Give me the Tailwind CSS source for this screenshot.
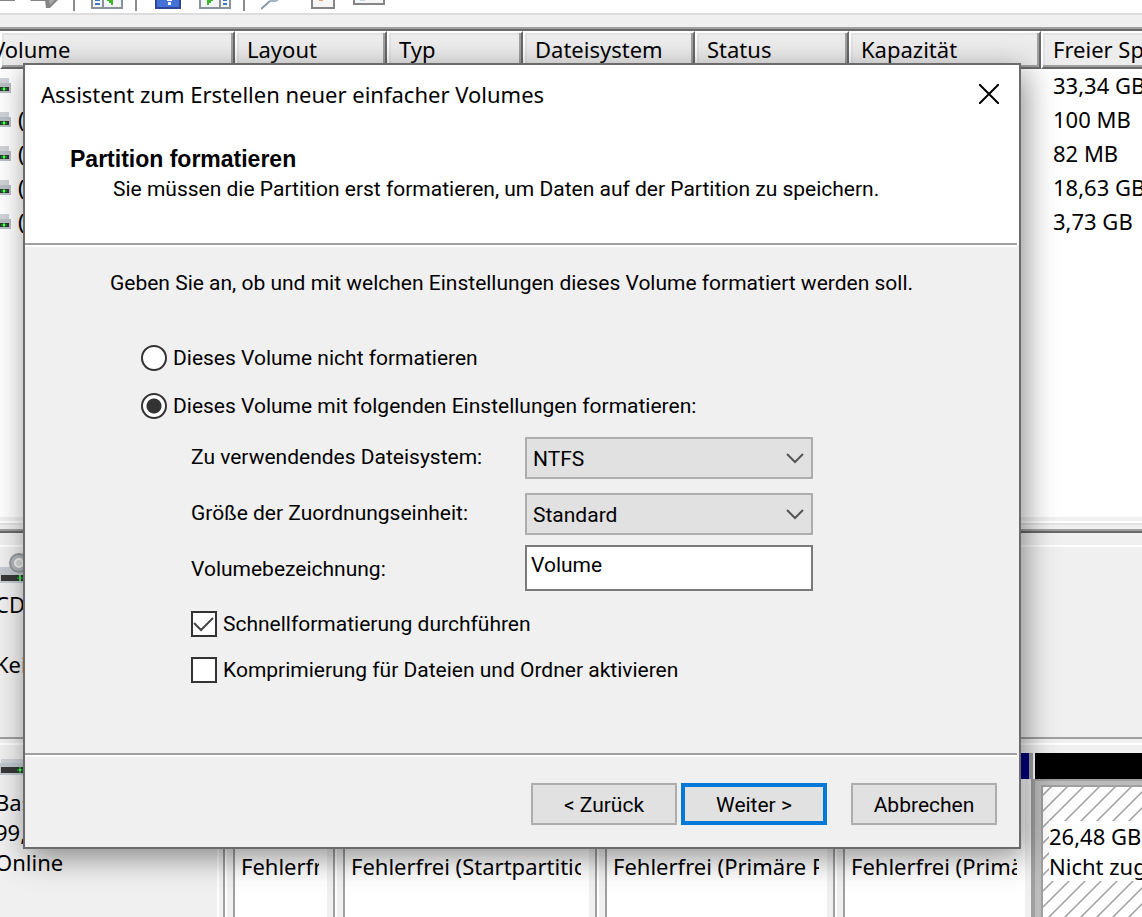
<!DOCTYPE html>
<html lang="de">
<head>
<meta charset="utf-8">
<title>Datenträgerverwaltung</title>
<script src="https://cdn.jsdelivr.net/npm/@tailwindcss/browser@4"></script>
</head>
<body class="relative h-screen overflow-hidden bg-[#f0f0f0] font-['Noto_Sans','Open_Sans',sans-serif] text-[22px] leading-[30px] text-black">

<svg class="hidden" aria-hidden="true">
  <symbol id="drive" viewBox="0 0 12 16">
    <path d="M0 0h9v5H0z" fill="#d0d3d7"/><path d="M0 5h11v10H0z" fill="#b9bfc6"/>
    <path d="M0 9h9v4H0z" fill="#333"/><path d="M1 10h6v2H1z" fill="#128a1c"/><path d="M3 9h2v4H3z" fill="#21b52b"/><path d="M3 10h2v2H3z" fill="#5dff68"/>
  </symbol>
  <symbol id="disk" viewBox="0 0 32 18">
    <path d="M1 0h31v6H1z" fill="#cfd3d8"/><path d="M0 4h32v12H0z" fill="#c2c8ce"/><path d="M1 8h31v6H1z" fill="#383838"/>
    <path d="M17 10h6v2h-6z" fill="#1e8f28"/><path d="M19 8h2v6h-2z" fill="#25a52f"/><path d="M19 10h2v2h-2z" fill="#66ff70"/>
  </symbol>
</svg>

<main class="flex h-full flex-col overflow-hidden">
  <nav class="flex h-[15px] shrink-0 items-start overflow-hidden border-b-2 border-[#dcdcdc] bg-white" aria-label="Symbolleiste">
    <svg class="h-[11px] w-[73px]" viewBox="0 0 73 11"><path d="M0 0h15v1H0zM30 0h16v1H31z" fill="#858585"/><path d="M45 0h13l-8 8h-4z" fill="#858585"/><path d="M49 0h6l-5 5z" fill="#a8a8a8"/></svg>
    <span class="h-[11px] w-[2px] bg-[#8c8c8c]"></span>
    <svg class="ml-4 h-[10px] w-[32px]" viewBox="0 0 32 10"><path d="M0 0h32v9H0z" fill="#8a9299"/><path d="M2 0h28v7H2z" fill="#f2f4f6"/><path d="M11 0h2v7h-2z" fill="#8a9299"/><path d="M4 0h5v1H4zM4 3h5v2H4z" fill="#3b78c8"/><path d="M16 0h6v5h-2V3h-2V1h-2z" fill="#3cb52c"/></svg>
    <span class="ml-3 h-[11px] w-[2px] bg-[#8c8c8c]"></span>
    <svg class="ml-[18px] h-[10px] w-[26px]" viewBox="0 0 26 10"><path d="M0 0h26v9H0z" fill="#2f4597"/><path d="M2 0h22v7H2z" fill="#4470d8"/><path d="M12 0h5v1h-5zM13 2h3v3h-3z" fill="#fff"/></svg>
    <svg class="ml-[18px] h-[10px] w-[32px]" viewBox="0 0 32 10"><path d="M0 0h32v9H0z" fill="#8a9299"/><path d="M2 0h28v7H2z" fill="#f2f4f6"/><path d="M20 0h2v7h-2z" fill="#8a9299"/><path d="M24 0h4v1h-4zM24 3h4v2h-4z" fill="#3b78c8"/><path d="M8 0h6v1h-2v2h-2v2H8z" fill="#3cb52c"/></svg>
    <span class="ml-3 h-[11px] w-[2px] bg-[#8c8c8c]"></span>
    <svg class="ml-4 h-[10px] w-[20px]" viewBox="0 0 20 10"><path d="M0 9l9-8" stroke="#8998a5" stroke-width="2"/><path d="M8 0h10l-3 2H9z" fill="#9fb6c9"/></svg>
    <svg class="ml-[30px] h-[10px] w-[24px]" viewBox="0 0 24 10"><path d="M0 0h24v9H0z" fill="#858585"/><path d="M2 0h20v7H2z" fill="#f6f6f6"/><path d="M8 0h4v1H8z" fill="#f0a070"/></svg>
    <svg class="ml-[18px] h-[10px] w-[32px]" viewBox="0 0 32 10"><path d="M0 0h32v5H0z" fill="#858585"/><path d="M2 0h28v3H2z" fill="#f6f6f6"/><path d="M7 0h5v1H7z" fill="#c2d6ea"/></svg>
  </nav>

  <section class="mt-3 flex h-[490px] shrink-0 flex-col overflow-hidden border-t-2 border-[#a0a0a0] bg-white">
    <table class="w-full min-w-[1240px] table-fixed border-separate border-spacing-0 border-t-2 border-[#696969] text-left">
      <colgroup><col class="w-[235px]"><col class="w-[152px]"><col class="w-[136px]"><col class="w-[172px]"><col class="w-[154px]"><col class="w-[192px]"><col></colgroup>
      <thead>
        <tr class="h-[38px] [&>th]:h-[38px] [&>th]:border-2 [&>th]:border-t-white [&>th]:border-l-white [&>th]:border-r-[#696969] [&>th]:border-b-[#696969] [&>th]:bg-[#ededed] [&>th]:px-[10px] [&>th]:pt-0 [&>th]:pb-[2px] [&>th]:font-normal [&>th]:whitespace-nowrap [&>th]:shadow-[inset_-2px_-2px_0_#a0a0a0,inset_2px_2px_0_#e3e3e3]">
          <th class="border-l-0"><span class="-ml-5">Volume</span></th><th>Layout</th><th>Typ</th><th>Dateisystem</th><th>Status</th><th>Kapazität</th><th>Freier Speicher</th>
        </tr>
      </thead>
      <tbody class="[&_td]:h-[34px] [&_td]:p-0 [&_td]:pb-[2px] [&_td:last-child]:pl-3">
        <tr><td><svg class="mt-[2px] h-4 w-3"><use href="#drive"/></svg></td><td colspan="5"></td><td>33,34 GB</td></tr>
        <tr><td><span class="flex items-center gap-[6px]"><svg class="mt-[2px] h-4 w-3"><use href="#drive"/></svg>(</span></td><td colspan="5"></td><td>100 MB</td></tr>
        <tr><td><span class="flex items-center gap-[6px]"><svg class="mt-[2px] h-4 w-3"><use href="#drive"/></svg>(</span></td><td colspan="5"></td><td>82 MB</td></tr>
        <tr><td><span class="flex items-center gap-[6px]"><svg class="mt-[2px] h-4 w-3"><use href="#drive"/></svg>(</span></td><td colspan="5"></td><td>18,63 GB</td></tr>
        <tr><td><span class="flex items-center gap-[6px]"><svg class="mt-[2px] h-4 w-3"><use href="#drive"/></svg>(</span></td><td colspan="5"></td><td>3,73 GB</td></tr>
      </tbody>
    </table>
  </section>

  <div class="flex h-3 shrink-0 flex-col pt-1"><span class="h-[2px] bg-white"></span><span class="h-[2px] bg-[#e3e3e3]"></span></div>

  <section class="flex min-h-0 flex-1 flex-col border-t-2 border-[#a0a0a0]">
    <div class="h-[208px] shrink-0 border-t-2 border-b-2 border-t-[#696969] border-b-[#a0a0a0] pt-3">
      <div class="h-full border-t-2 border-white pt-[6px] whitespace-nowrap">
        <svg class="h-[32px] w-[34px]" viewBox="0 0 34 32"><g transform="translate(0 14)"><path d="M0 0h34v16H0z" fill="#c5cad0"/><path d="M1 8h33v6H1z" fill="#383838"/><path d="M17 10h6v2h-6z" fill="#1e8f28"/><path d="M19 8h2v6h-2z" fill="#4fdb5b"/></g><circle cx="19" cy="10" r="9" fill="#b5b9bc" stroke="#96999c" stroke-width="2"/><circle cx="19" cy="10" r="4" fill="#d8dada" stroke="#f2f2f2" stroke-width="2"/></svg>
        <p class="-ml-[5px] pt-1">CD</p>
        <p class="-ml-[5px] pt-[30px]">Kei</p>
      </div>
    </div>
    <div class="mt-1 flex min-h-0 flex-1 border-t-2 border-white whitespace-nowrap">
      <div class="w-[219px] shrink-0 border-r-2 border-white pt-[14px]">
        <svg class="h-[18px] w-8"><use href="#disk"/></svg>
        <div class="-ml-[5px] pt-[10px]"><p>Bas</p><p>99,</p><p>Online</p></div>
      </div>
      <div class="flex w-[812px] shrink-0 flex-col pt-2">
        <span class="h-[26px] shrink-0 border-r-2 border-[#a0a0a0] bg-[#000080]"></span>
        <div class="flex min-h-0 flex-1 pl-1 [&>div]:border-l-2 [&>div]:border-[#a0a0a0] [&>div]:pt-[72px] [&>div>p]:overflow-hidden [&>div>p]:pl-[6px]">
          <div class="flex w-[2px] shrink-0"></div>
          <span class="w-[8px] border-l-2 border-white"></span>
          <div class="w-[94px] bg-white pr-2"><p>Fehlerfrei</p></div>
          <span class="w-[8px] border-r-2 border-[#a0a0a0]"></span><span class="w-[8px] border-l-2 border-white"></span>
          <div class="w-[246px] bg-white pr-2"><p>Fehlerfrei (Startpartition)</p></div>
          <span class="w-[8px] border-r-2 border-[#a0a0a0]"></span><span class="w-[8px] border-l-2 border-white"></span>
          <div class="w-[222px] bg-white pr-2"><p>Fehlerfrei (Primäre Partition)</p></div>
          <span class="w-[8px] border-r-2 border-[#a0a0a0]"></span><span class="w-[8px] border-l-2 border-white"></span>
          <div class="w-[182px] bg-white pr-2"><p>Fehlerfrei (Primäre Partition)</p></div>
        </div>
      </div>
      <div class="flex min-w-0 flex-1 flex-col pt-2">
        <span class="h-[26px] shrink-0 border-l-2 border-[#a0a0a0] bg-black shadow-[inset_2px_0_0_#fff]"></span>
        <div class="min-h-0 flex-1 border-t-2 border-l-4 border-[#a0a0a0] bg-[#bcbcbc] pt-1 pl-[6px]">
          <div class="relative h-full overflow-hidden border-t-2 border-l-2 border-[#a0a0a0] bg-white">
            <svg class="absolute inset-0 h-full w-full" aria-hidden="true"><defs><pattern id="hatch" width="16" height="16" patternUnits="userSpaceOnUse"><path d="M-2 10L10 -2M-2 26L26 -2M6 18L18 6" stroke="#a0a0a0" stroke-width="1.5" fill="none"/></pattern></defs><rect width="100%" height="100%" fill="url(#hatch)"/></svg>
            <div class="relative pt-[34px] pl-[6px]"><p class="bg-white">26,48 GB</p><p class="overflow-hidden bg-white">Nicht zugeordnet</p></div>
          </div>
        </div>
      </div>
    </div>
  </section>
</main>

<form role="dialog" aria-labelledby="title" class="absolute top-[63px] left-[23px] flex h-[786px] w-[998px] flex-col border-2 border-[#6b6b6b] bg-[#f0f0f0] font-[Roboto,'Liberation_Sans',sans-serif] text-[21px] leading-[28px] whitespace-nowrap shadow-[4px_8px_30px_rgba(0,0,0,0.45)]">
  <header class="mr-[2px] h-[180px] shrink-0 border-b-2 border-[#a0a0a0] bg-white shadow-[2px_0_0_#fff,0_2px_0_#fff]">
    <div class="flex h-[57px] items-center justify-between pr-[18px] pl-4 font-['Noto_Sans','Open_Sans',sans-serif] text-[22px]">
      <h1 id="title">Assistent zum Erstellen neuer einfacher Volumes</h1>
      <button type="button" aria-label="Schließen"><svg class="size-5" viewBox="0 0 20 20"><path d="M0 0l20 20M20 0L0 20" stroke="#000" stroke-width="2"/></svg></button>
    </div>
    <h2 class="pt-[23px] pl-[45px] font-['Liberation_Sans',sans-serif] text-[23px] font-bold">Partition formatieren</h2>
    <p class="pt-[2px] pl-[88px]">Sie müssen die Partition erst formatieren, um Daten auf der Partition zu speichern.</p>
  </header>

  <div class="flex-1 pt-6 pl-[85px]">
    <p>Geben Sie an, ob und mit welchen Einstellungen dieses Volume formatiert werden soll.</p>
    <div class="flex flex-col gap-5 pt-[47px] pl-[31px]">
      <label class="flex items-center gap-[6px]"><input type="radio" name="fmt" class="size-[26px] appearance-none rounded-full border-2 border-[#333] bg-white checked:bg-[radial-gradient(circle,#333_7px,#fff_8px)]">Dieses Volume nicht formatieren</label>
      <label class="flex items-center gap-[6px]"><input type="radio" name="fmt" checked class="size-[26px] appearance-none rounded-full border-2 border-[#333] bg-white checked:bg-[radial-gradient(circle,#333_7px,#fff_8px)]">Dieses Volume mit folgenden Einstellungen formatieren:</label>
    </div>
    <div class="grid grid-cols-[334px_288px] pt-[17px] pl-[81px]">
      <label for="fs" class="h-14 pt-[6px]">Zu verwendendes Dateisystem:</label>
      <div class="relative h-[42px]"><select id="fs" class="h-full w-full appearance-none border-2 border-[#adadad] bg-[#e1e1e1] px-[6px] pt-[2px]"><option>NTFS</option></select><svg class="pointer-events-none absolute top-[16px] right-[9px] h-[11px] w-[18px]" viewBox="0 0 18 11" fill="none"><path d="M1 1l8 8 8-8" stroke="#555" stroke-width="2"/></svg></div>
      <label for="au" class="h-[52px] pt-[6px]">Größe der Zuordnungseinheit:</label>
      <div class="relative h-[42px]"><select id="au" class="h-full w-full appearance-none border-2 border-[#adadad] bg-[#e1e1e1] px-[6px] pt-[2px]"><option>Standard</option></select><svg class="pointer-events-none absolute top-[16px] right-[9px] h-[11px] w-[18px]" viewBox="0 0 18 11" fill="none"><path d="M1 1l8 8 8-8" stroke="#555" stroke-width="2"/></svg></div>
      <label for="vol" class="pt-[10px]">Volumebezeichnung:</label>
      <input id="vol" type="text" value="Volume" class="h-[46px] border-2 border-[#7a7a7a] bg-white px-1 pb-[6px]">
    </div>
    <div class="flex flex-col gap-[18px] pt-[19px] pl-[81px]">
      <label class="flex items-center gap-[6px]"><span class="relative size-[26px]"><input type="checkbox" checked class="block size-[26px] appearance-none border-2 border-[#333] bg-white"><svg class="pointer-events-none absolute inset-0 size-[26px]" viewBox="0 0 26 26" fill="none"><path d="M3 12l7 7L22 7" stroke="#444" stroke-width="2"/></svg></span>Schnellformatierung durchführen</label>
      <label class="flex items-center gap-[6px]"><input type="checkbox" class="block size-[26px] appearance-none border-2 border-[#333] bg-white">Komprimierung für Dateien und Ordner aktivieren</label>
    </div>
  </div>

  <footer class="mr-[2px] flex h-[94px] shrink-0 justify-end border-t-2 border-[#a0a0a0] pt-7 pr-5 shadow-[inset_0_2px_0_#fff]">
    <button type="button" class="h-[42px] w-[146px] border-2 border-[#adadad] bg-[#e1e1e1] pt-[2px]">&lt; Zurück</button>
    <button type="submit" class="ml-1 h-[42px] w-[146px] border-4 border-[#0078d7] bg-[#e1e1e1] pt-[2px]">Weiter &gt;</button>
    <button type="button" class="ml-6 h-[42px] w-[146px] border-2 border-[#adadad] bg-[#e1e1e1] pt-[2px]">Abbrechen</button>
  </footer>
</form>
</body>
</html>
